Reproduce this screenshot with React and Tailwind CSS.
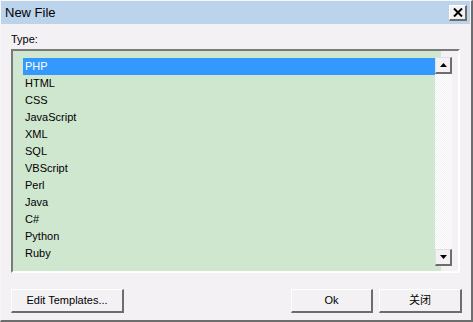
import React from 'react';

const items = ['PHP', 'HTML', 'CSS', 'JavaScript', 'XML', 'SQL', 'VBScript', 'Perl', 'Java', 'C#', 'Python', 'Ruby'];

const font = "font-['Liberation_Sans','Noto_Sans_CJK_SC',sans-serif]";

const Arrow = ({ up }) => (
  <div className="h-[17px] w-[17px] flex items-center justify-center bg-[#f4f1f4] border-t border-l border-t-[#e3e0e3] border-l-[#e3e0e3] border-r-2 border-b-2 border-r-[#6d6d6d] border-b-[#6d6d6d]">
    <svg width="7" height="4" viewBox="0 0 7 4">
      {up ? <path d="M3.5 0L7 4H0z" fill="#000" /> : <path d="M0 0h7L3.5 4z" fill="#000" />}
    </svg>
  </div>
);

const Button = ({ children, className = '' }) => (
  <button className={`h-[24px] bg-[#f4f1f4] text-[11px] text-black border-t border-l border-t-white border-l-white border-r-2 border-b-2 border-r-[#6d6d6d] border-b-[#6d6d6d] ${className}`}>
    {children}
  </button>
);

export default function App() {
  return (
    <div className={`w-[473px] h-[322px] flex flex-col bg-[#f4f1f4] border-l border-t border-l-[#f8f6f8] border-t-[#f8f6f8] border-r-2 border-b-2 border-r-[#6d6d6d] border-b-[#6d6d6d] ${font}`}>
      <div className="h-[23px] mr-[1px] bg-[#bcd3ec] flex items-center justify-between pl-[4px] pr-[3px]">
        <span className="text-[13px] text-black">New File</span>
        <div className="h-[16px] w-[18px] flex items-center justify-center bg-[#f4f1f4] border-t border-l border-t-white border-l-white border-r-2 border-b-2 border-r-[#6d6d6d] border-b-[#6d6d6d]">
          <svg width="10" height="9" viewBox="0 0 10 9">
            <path d="M1 0.5L9 8.5M9 0.5L1 8.5" stroke="#000" strokeWidth="2" />
          </svg>
        </div>
      </div>

      <div className="flex-1 flex flex-col px-[10px] pt-[9px]">
        <span className="text-[11px] leading-[13px] text-black">Type:</span>
        <div className="mt-[3px] w-[449px] h-[224px] border-t-2 border-l-2 border-t-[#7a7a7a] border-l-[#7a7a7a] border-r-2 border-b-2 border-r-white border-b-white">
          <div className="h-full bg-[linear-gradient(to_right,#cfe6cf_428px,#f4f1f4_428px)] flex pl-[10px] pt-[6px]">
            <ul className="w-[412px] pt-[1px]">
              {items.map((it, i) => (
                <li
                  key={it}
                  className={`h-[17px] pl-[2px] text-[11px] leading-[17px] ${i === 0 ? 'bg-[#3399ff] text-white' : 'text-black'}`}
                >
                  {it}
                </li>
              ))}
            </ul>
            <div className="w-[17px] h-[209px] flex flex-col">
              <Arrow up />
              <div className="flex-1 bg-[repeating-conic-gradient(#f4f1f4_0_25%,#ffffff_0_50%)] bg-[length:2px_2px]" />
              <Arrow />
            </div>
          </div>
        </div>

        <div className="mt-[16px] flex items-center">
          <Button className="w-[113px]">Edit Templates...</Button>
          <Button className="ml-auto w-[82px]">Ok</Button>
          <Button className="ml-[6px] mr-[-1px] w-[83px]">关闭</Button>
        </div>
      </div>
    </div>
  );
}
